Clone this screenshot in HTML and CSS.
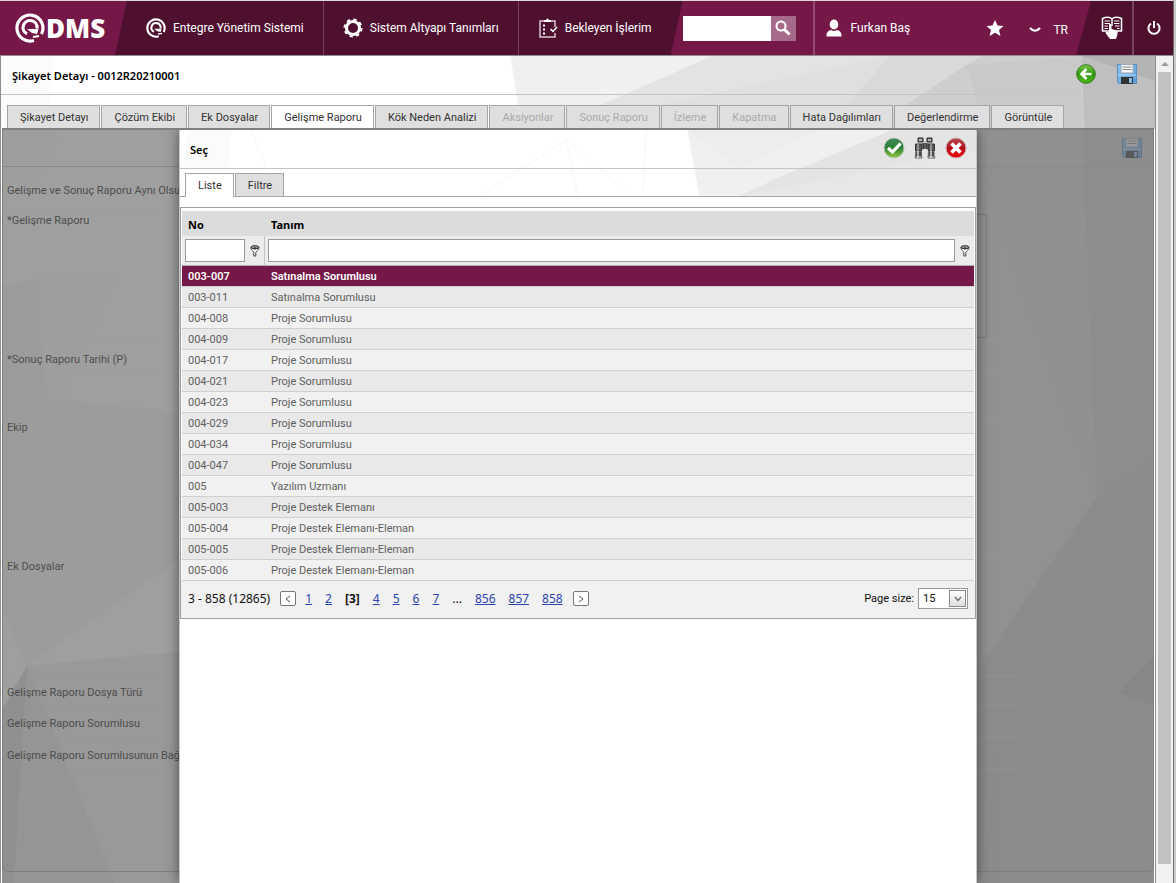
FILE: index.html
```html
<!DOCTYPE html>
<html lang="tr">
<head>
    <meta charset="UTF-8">
    <title>QDMS</title>
    <link rel="stylesheet" href="styles.css">
</head>
<body>
<svg class="defs" aria-hidden="true">
    <defs>
        <linearGradient id="blue" x1="0" y1="0" x2="1" y2="1">
            <stop offset="0" stop-color="#8fc4ee"/><stop offset="1" stop-color="#5a9cd8"/>
        </linearGradient>
        <linearGradient id="green" x1="0" y1="0" x2="0" y2="1">
            <stop offset="0" stop-color="#7cc644"/><stop offset="0.5" stop-color="#2f9a12"/><stop offset="1" stop-color="#4db81c"/>
        </linearGradient>
        <linearGradient id="ok" x1="0" y1="0" x2="0" y2="1">
            <stop offset="0" stop-color="#3f8a5c"/><stop offset="0.5" stop-color="#2f8038"/><stop offset="1" stop-color="#8cc83c"/>
        </linearGradient>
        <linearGradient id="red" x1="0" y1="0" x2="0" y2="1">
            <stop offset="0" stop-color="#b84a50"/><stop offset="0.5" stop-color="#b01018"/><stop offset="1" stop-color="#f00808"/>
        </linearGradient>
    </defs>
    <symbol id="q" viewBox="0 0 30 30">
        <path d="M19 27.400A13 13 0 1 1 26.500 21" fill="none" stroke="currentColor" stroke-width="3.200"/>
        <path d="M12 20.800A7 7 0 1 1 22 15.500" fill="none" stroke="currentColor" stroke-width="3.200"/>
        <path d="M12 16H23.500L22 21L17 20Z" fill="currentColor"/>
        <path d="M18 24L24 23" stroke="currentColor" stroke-width="2"/>
    </symbol>
    <symbol id="floppy" viewBox="0 0 20 20">
        <path d="M0.500 0.500H19.500V19.500H2L0.500 18Z" fill="url(#blue)" stroke="#5a8cc0"/>
        <path d="M4 0.500H16V9H4Z" fill="#f4f4f4" stroke="#9ab"/>
        <path d="M5.500 3H14.500M5.500 5.500H14.500" stroke="#888" stroke-width="1.200"/>
        <path d="M1 11H19" stroke="#b9dcf8"/>
        <path d="M4 13H16V20H4Z" fill="#333"/>
        <path d="M12 14H15V19H12Z" fill="#8ab8e4"/>
    </symbol>
    <symbol id="funnel" viewBox="0 0 10 12">
        <path d="M0.800 2.500C0.800 5 3.800 6 3.800 7.500V11H5.800V7.500C5.800 6 9 5 9 2.500Z" fill="#fff" stroke="#444"/>
        <ellipse cx="5" cy="2.200" rx="4" ry="1.500" fill="#999" stroke="#333"/>
        <path d="M5 2V5" stroke="#333"/>
    </symbol>
</svg>

<div class="page">
    <header class="topbar">
        <a href="#" class="logo">
            <svg class="logo-mark"><use href="#q"/></svg>
            <span>DMS</span>
        </a>
        <nav class="menu">
            <a href="#">
                <svg class="menu-icon"><use href="#q"/></svg>
                Entegre Yönetim Sistemi
            </a>
            <a href="#">
                <svg class="menu-icon" viewBox="0 0 20 20">
                    <circle cx="10" cy="10" r="8.500" fill="none" stroke="#fff" stroke-width="2" stroke-dasharray="3.338 3.338"/>
                    <circle cx="10" cy="10" r="6.500" fill="none" stroke="#fff" stroke-width="3"/>
                </svg>
                Sistem Altyapı Tanımları
            </a>
            <a href="#">
                <svg class="menu-icon" viewBox="0 0 20 20">
                    <path d="M6 3H2V19H17V15M13 3H17V9" fill="none" stroke="#d9c8d0" stroke-width="1.500"/>
                    <path d="M6 4V2H8Q9.500 -1 11 2H13V4Z" fill="#fff"/>
                    <path d="M5 7.500H7M5 11.500H7M5 15.500H7" stroke="#fff" stroke-width="2"/>
                    <path d="M12.500 11L15 13.500L19 9" fill="none" stroke="#fff" stroke-width="1.500"/>
                </svg>
                Bekleyen İşlerim
            </a>
        </nav>
        <div class="account">
            <form class="search">
                <input type="text" aria-label="Ara">
                <button type="button" aria-label="Ara">
                    <svg width="16" height="16" viewBox="0 0 16 16">
                        <circle cx="6" cy="6" r="4.500" fill="none" stroke="#fff" stroke-width="2"/>
                        <path d="M9.500 9.500L14.500 14.500" stroke="#fff" stroke-width="3"/>
                    </svg>
                </button>
            </form>
            <a href="#" class="user">
                <svg width="16" height="18" viewBox="0 0 16 18">
                    <ellipse cx="8" cy="5.500" rx="4.300" ry="5" fill="#fff"/>
                    <path d="M0.500 17.500Q0 12 5 11Q8 13 11 11Q16 12 15.500 17.500Z" fill="#fff"/>
                </svg>
                Furkan Baş
            </a>
            <button type="button" class="star" aria-label="Favoriler">
                <svg width="18" height="18" viewBox="0 0 18 18">
                    <path d="M9 1L11.500 6.500L17.500 7L13 11L14.500 17L9 13.800L3.500 17L5 11L0.500 7L6.500 6.500Z" fill="#fff"/>
                </svg>
            </button>
            <button type="button" class="lang">
                <svg width="12" height="6" viewBox="0 0 12 6">
                    <path d="M1 1Q6 6.500 11 1" fill="none" stroke="#fff" stroke-width="2.200"/>
                </svg>
                TR
            </button>
        </div>
        <button type="button" class="tool help" aria-label="Yardım">
            <svg width="22" height="24" viewBox="0 0 22 24">
                <path d="M8 15H1.500V2.500Q8 0 11 3Q14 0 20.500 2.500V15H15M11 3V10" fill="none" stroke="#fff" stroke-width="1.500"/>
                <path d="M3.500 5H9M3.500 7.500H9M3.500 10H7M3.500 12.500H7M13 5H18.500M13 7.500H18.500M14 10H18.500M16 12.500H18.500" stroke="#fff"/>
                <path d="M8 8Q9.500 7 10.500 9V13L16 14.500Q17 15 16.500 18L15 23H9L4.500 17Q5 15 8 16Z" fill="#fff"/>
            </svg>
        </button>
        <button type="button" class="tool power" aria-label="Çıkış">
            <svg width="16" height="16" viewBox="0 0 16 16">
                <path d="M5 3.500A5.600 5.600 0 1 0 11 3.500" fill="none" stroke="#fff" stroke-width="2"/>
                <path d="M8 1V8" stroke="#fff" stroke-width="2"/>
            </svg>
        </button>
    </header>

    <div class="workspace">
        <main class="content">
            <svg class="backdrop" viewBox="0 0 1155 73" preserveAspectRatio="none">
                <path d="M0 0H52L48 73H0Z" fill="#fbfbfb"/>
                <path d="M510 0H1155V73H521Z" fill="#f0f0f0"/>
                <path d="M574 0L620 45L600 49L712 0H820L680 73H640Z" fill="#f3f3f3"/>
                <path d="M574 73L600 49L712 0H1155V73Z" fill="#e3e3e3"/>
                <path d="M660 49L890 0H1155V73H700Z" fill="#dfdfdf"/>
                <path d="M825 73L890 0H1155V73Z" fill="#d9d9d9"/>
                <path d="M870 73L966 9L982 0H1155V73Z" fill="#cecece"/>
                <path d="M966 9L1082 0V73H985Z" fill="#c9c9c9"/>
                <path d="M1082 0H1155V73H1084Z" fill="#bfbfbf"/>
                <path d="M1082 0H1155V25Z" fill="#b3b3b3"/>
            </svg>
            <div class="title-bar">
                <h1>Şikayet Detayı - 0012R20210001</h1>
                <div class="actions">
                    <button type="button" aria-label="Geri">
                        <svg width="20" height="20" viewBox="0 0 20 20">
                            <circle cx="10" cy="10" r="9.300" fill="url(#green)" stroke="#2c7a18"/>
                            <path d="M15.500 10H6M10.500 5L5.500 10L10.500 15" fill="none" stroke="#fff" stroke-width="2.600"/>
                        </svg>
                    </button>
                    <button type="button" aria-label="Kaydet"><svg width="20" height="20"><use href="#floppy"/></svg></button>
                </div>
            </div>
            <nav class="tabs">
                <a href="#">Şikayet Detayı</a>
                <a href="#">Çözüm Ekibi</a>
                <a href="#">Ek Dosyalar</a>
                <a href="#" class="active">Gelişme Raporu</a>
                <a href="#">Kök Neden Analizi</a>
                <a href="#" class="disabled">Aksiyonlar</a>
                <a href="#" class="disabled">Sonuç Raporu</a>
                <a href="#" class="disabled">İzleme</a>
                <a href="#" class="disabled">Kapatma</a>
                <a href="#">Hata Dağılımları</a>
                <a href="#">Değerlendirme</a>
                <a href="#">Görüntüle</a>
            </nav>
            <section class="panel">
                <svg class="backdrop" viewBox="2 129 1152 754" preserveAspectRatio="none">
                    <path d="M2 129H1154V883H2Z" fill="#e4e4e4"/>
                    <path d="M2 129H60L38 180L2 200Z" fill="#e3e3e3"/>
                    <path d="M2 286L38 280L47 400L2 382Z" fill="#e0e0e0"/>
                    <path d="M38 280L118 273L60 400L47 400Z" fill="#e3e3e3"/>
                    <path d="M2 382L48 398L110 406L179 412V560L27 666L2 610Z" fill="#e0e0e0"/>
                    <path d="M27 666L179 652V883H2Z" fill="#dbdbdb"/>
                    <path d="M27 666L115 883H14Z" fill="#d6d6d6"/>
                    <path d="M27 666L2 710V883H14Z" fill="#cecece"/>
                    <path d="M977 129H1154V883H977Z" fill="#d0d0d0"/>
                    <path d="M985 182L1010 129H1082L1097 497Z" fill="#cecece"/>
                    <path d="M1082 129H1154V460L1097 497Z" fill="#cacaca"/>
                    <path d="M1097 497L977 670V883H1154V460Z" fill="#c9c9c9"/>
                    <path d="M1019 657L1118 693L1041 883H985L992 765Z" fill="#c7c7c7"/>
                    <path d="M1154 656L1118 693L1154 706Z" fill="#c2c2c2"/>
                </svg>
                <div class="form">
                    <div class="form-tools">
                        <button type="button" aria-label="Kaydet"><svg width="20" height="20"><use href="#floppy"/></svg></button>
                    </div>
                    <div class="fields">
                        <div class="field"><span>Gelişme ve Sonuç Raporu Aynı Olsun</span></div>
                        <div class="field top">
                            <label for="report">*Gelişme Raporu</label>
                            <textarea id="report"></textarea>
                        </div>
                        <div class="field"><span>*Sonuç Raporu Tarihi (P)</span></div>
                        <div class="field"></div>
                        <div class="field top"><span>Ekip</span></div>
                        <div class="field top"><span>Ek Dosyalar</span></div>
                        <div class="field"><span>Gelişme Raporu Dosya Türü</span></div>
                        <div class="field"><span>Gelişme Raporu Sorumlusu</span></div>
                        <div class="field"><span>Gelişme Raporu Sorumlusunun Bağ</span></div>
                    </div>
                </div>

                <div class="overlay">
                    <div class="dialog" role="dialog" aria-labelledby="dialog-title">
                        <div class="dialog-top">
                            <svg class="backdrop" viewBox="0 0 797 67" preserveAspectRatio="none">
                                <path d="M8 0H52L48 40H4Z" fill="#fbfbfb"/>
                                <path d="M72 0L88 44M387 10L300 67M387 10L398 67M387 10L452 67M467 0L463 67" fill="none" stroke="#f6f6f6"/>
                                <path d="M508 0H797V67H520Z" fill="#f0f0f0"/>
                                <path d="M508 0H640L560 40Z" fill="#ededed"/>
                                <path d="M712 0H797V67H560L600 48Z" fill="#e4e4e4"/>
                                <path d="M797 20L560 67H797Z" fill="#e7e7e7"/>
                            </svg>
                            <div class="dialog-head">
                                <h2 id="dialog-title">Seç</h2>
                                <div class="actions">
                                    <button type="button" aria-label="Tamam">
                                        <svg width="22" height="22" viewBox="0 0 22 22">
                                            <circle cx="11" cy="11" r="10" fill="url(#ok)" stroke="#b8c8b8"/>
                                            <path d="M5 11L9.500 15L17.500 6.500" fill="none" stroke="#fff" stroke-width="3.200"/>
                                        </svg>
                                    </button>
                                    <button type="button" aria-label="Bul">
                                        <svg width="22" height="22" viewBox="0 0 22 22">
                                            <path d="M4 1H9V5H4ZM13 1H18V5H13Z" fill="#777" stroke="#222"/>
                                            <path d="M5 3H8M14 3H17" stroke="#fff"/>
                                            <path d="M1.500 7H8V12L7.500 14H1.500ZM14 7H20.500V14H14.500L14 12Z" fill="#555" stroke="#333"/>
                                            <path d="M4 7V14M17 7V14" stroke="#ccc"/>
                                            <path d="M8.500 6H13.500V12H8.500Z" fill="#333"/>
                                            <path d="M11 4V12" stroke="#999"/>
                                            <path d="M2 14.500H7.500V18L8 21H1L1.500 18ZM14.500 14.500H20V18L21 21H14Z" fill="#444" stroke="#666"/>
                                            <path d="M4 14V21M17 14V21" stroke="#ddd" stroke-width="1.500"/>
                                            <path d="M1.500 20H7.500M14.500 20H20.500" stroke="#ddd"/>
                                        </svg>
                                    </button>
                                    <button type="button" aria-label="Kapat">
                                        <svg width="22" height="22" viewBox="0 0 22 22">
                                            <circle cx="11" cy="11" r="10" fill="url(#red)" stroke="#c8b0b0"/>
                                            <path d="M6.500 6.500L15.500 15.500M15.500 6.500L6.500 15.500" stroke="#fff" stroke-width="3.800"/>
                                        </svg>
                                    </button>
                                </div>
                            </div>
                            <nav class="tabs dialog-tabs">
                                <a href="#" class="active">Liste</a>
                                <a href="#">Filtre</a>
                            </nav>
                        </div>

                        <div class="grid">
                            <table>
                                <colgroup><col class="col-no"><col></colgroup>
                                <thead>
                                <tr class="heads">
                                    <th scope="col">No</th>
                                    <th scope="col">Tanım</th>
                                </tr>
                                <tr class="filters">
                                    <td>
                                        <div class="filter">
                                            <input type="text" aria-label="No">
                                            <button type="button" aria-label="No filtresi"><svg width="10" height="12"><use href="#funnel"/></svg></button>
                                        </div>
                                    </td>
                                    <td>
                                        <div class="filter">
                                            <input type="text" aria-label="Tanım">
                                            <button type="button" aria-label="Tanım filtresi"><svg width="10" height="12"><use href="#funnel"/></svg></button>
                                        </div>
                                    </td>
                                </tr>
                                </thead>
                                <tbody>
                                <tr class="selected"><td>003-007</td><td>Satınalma Sorumlusu</td></tr>
                                <tr><td>003-011</td><td>Satınalma Sorumlusu</td></tr>
                                <tr><td>004-008</td><td>Proje Sorumlusu</td></tr>
                                <tr><td>004-009</td><td>Proje Sorumlusu</td></tr>
                                <tr><td>004-017</td><td>Proje Sorumlusu</td></tr>
                                <tr><td>004-021</td><td>Proje Sorumlusu</td></tr>
                                <tr><td>004-023</td><td>Proje Sorumlusu</td></tr>
                                <tr><td>004-029</td><td>Proje Sorumlusu</td></tr>
                                <tr><td>004-034</td><td>Proje Sorumlusu</td></tr>
                                <tr><td>004-047</td><td>Proje Sorumlusu</td></tr>
                                <tr><td>005</td><td>Yazılım Uzmanı</td></tr>
                                <tr><td>005-003</td><td>Proje Destek Elemanı</td></tr>
                                <tr><td>005-004</td><td>Proje Destek Elemanı-Eleman</td></tr>
                                <tr><td>005-005</td><td>Proje Destek Elemanı-Eleman</td></tr>
                                <tr><td>005-006</td><td>Proje Destek Elemanı-Eleman</td></tr>
                                </tbody>
                            </table>
                            <div class="pager">
                                <span class="summary">3 - 858 (12865)</span>
                                <button type="button" class="step" aria-label="Önceki">
                                    <svg width="6" height="8" viewBox="0 0 6 8"><path d="M5 1L1 4L5 7" fill="none" stroke="#555"/></svg>
                                </button>
                                <div class="pages">
                                    <a href="#">1</a>
                                    <a href="#">2</a>
                                    <strong>[3]</strong>
                                    <a href="#">4</a>
                                    <a href="#">5</a>
                                    <a href="#">6</a>
                                    <a href="#">7</a>
                                    <span>...</span>
                                    <a href="#">856</a>
                                    <a href="#">857</a>
                                    <a href="#">858</a>
                                </div>
                                <button type="button" class="step" aria-label="Sonraki">
                                    <svg width="6" height="8" viewBox="0 0 6 8"><path d="M1 1L5 4L1 7" fill="none" stroke="#555"/></svg>
                                </button>
                                <label for="page-size">Page size:</label>
                                <div class="size-box">
                                    <select id="page-size">
                                        <option>15</option>
                                        <option>30</option>
                                        <option>50</option>
                                    </select>
                                    <span class="size-arrow">
                                        <svg width="8" height="6" viewBox="0 0 8 6"><path d="M1 1L4 4.500L7 1" fill="none" stroke="#777" stroke-width="1.500"/></svg>
                                    </span>
                                </div>
                            </div>
                        </div>
                    </div>
                </div>
            </section>
        </main>
        <div class="scrollbar">
            <span class="arrow"></span>
            <span class="thumb"></span>
        </div>
    </div>
</div>
</body>
</html>
```
FILE: styles.css
```css
* {
    margin: 0;
    padding: 0;
    box-sizing: border-box;
}

body {
    font-family: Roboto, "Noto Sans", sans-serif;
    font-size: 11px;
    color: #333;
    background: #cacaca;
}

a {
    color: inherit;
    text-decoration: none;
}

button {
    display: flex;
    align-items: center;
    justify-content: center;
    border: 0;
    background: none;
    font: inherit;
    color: inherit;
    cursor: pointer;
}

svg {
    display: block;
    flex: none;
}

.defs {
    position: absolute;
    width: 0;
    height: 0;
}

.page {
    display: flex;
    flex-direction: column;
    min-height: 100vh;
    margin-right: 2px;
    border-top: 1px solid #d9d9d9;
    border-right: 1px solid #707070;
    background: #fff;
}

/* top bar */

.topbar {
    display: flex;
    height: 55px;
    border-bottom: 1px solid #8e8e8e;
    background: #4f0f2f;
    color: #fff;
    font-size: 12px;
}

.logo {
    display: flex;
    align-items: center;
    width: 127px;
    padding-left: 15px;
    gap: 1px;
    background: #751847;
    clip-path: polygon(0 0, 100% 0, calc(100% - 12px) 100%, 0 100%);
    font-family: "Open Sans", "Noto Sans", sans-serif;
    font-size: 26px;
    font-weight: 800;
}

.logo-mark {
    width: 30px;
    height: 30px;
}

.menu {
    display: flex;
}

.menu a {
    display: flex;
    align-items: center;
    gap: 7px;
    padding: 0 19px;
    border-right: 1px solid #74445b;
    white-space: nowrap;
}

.menu a:last-child {
    border-right: 0;
}

.menu-icon {
    width: 20px;
    height: 20px;
}

.account {
    display: flex;
    flex: 1;
    align-items: center;
    padding-left: 12px;
    padding-right: 23px;
    background: #751847;
    clip-path: polygon(12px 0, 100% 0, calc(100% - 15px) 100%, 0 100%);
}

.search {
    display: flex;
    height: 25px;
}

.search input {
    width: 88px;
    border: 0;
    background: #fff;
}

.search button {
    width: 25px;
    background: #a66b8a;
}

.user {
    display: flex;
    align-items: center;
    gap: 9px;
    height: 100%;
    margin-left: 17px;
    padding-left: 11px;
    border-left: 2px solid #8f4a6e;
}

.star {
    margin-left: auto;
}

.lang {
    gap: 12px;
    margin-left: 25px;
    padding-top: 4px;
}

.tool {
    width: 41px;
}

.power {
    border-left: 2px solid #74445b;
}

/* page content */

.workspace {
    display: flex;
    flex: 1;
}

.content {
    position: relative;
    display: flex;
    flex: 1;
    flex-direction: column;
    border-left: 1px solid #8e8e8e;
    border-right: 1px solid #8e8e8e;
}

.backdrop {
    position: absolute;
    top: 0;
    left: 0;
    width: 100%;
    height: 73px;
}

.title-bar {
    position: relative;
    display: flex;
    align-items: center;
    justify-content: space-between;
    height: 39px;
    padding: 0 18px 2px 11px;
    border-bottom: 1px solid #c4c4c4;
}

h1,
h2 {
    padding-top: 2px;
    font-family: "Noto Sans", sans-serif;
    font-size: 11px;
    font-weight: 600;
    color: #000;
}

.actions {
    display: flex;
    align-items: center;
    gap: 21px;
}

.tabs {
    position: relative;
    display: flex;
    gap: 1px;
    margin-top: 10px;
    padding-left: 6px;
}

.tabs a {
    height: 23px;
    padding: 0 11px 0 12px;
    border: 1px solid #a5a5a5;
    border-bottom: 0;
    background: #dfdfdf;
    line-height: 24px;
    white-space: nowrap;
}

.tabs .active {
    background: #fff;
}

.tabs .disabled {
    color: #aaa;
}

.panel {
    position: relative;
    display: flex;
    flex: 1;
    flex-direction: column;
    margin: 0 1px;
}

.panel > .backdrop {
    height: 100%;
}

.form {
    position: relative;
    padding-bottom: 101px;
    border: 1px solid #b4b4b4;
    border-radius: 0 0 6px 6px;
}

.form-tools {
    display: flex;
    justify-content: flex-end;
    height: 38px;
    padding: 9px 11px;
    border-bottom: 1px solid #c4c4c4;
}

.form-tools button {
    height: 20px;
    opacity: 0.5;
}

.fields {
    display: grid;
    grid-template-rows: 44px 130px 34px 43px 139px 119px 30px 32px 32px;
    margin: 0 133px 0 4px;
    color: #707070;
}

.field {
    display: flex;
    align-items: center;
    padding-top: 3px;
    border-bottom: 1px dotted #d8d8d8;
    white-space: nowrap;
}

.field.top {
    align-items: flex-start;
}

.field label {
    width: 190px;
}

.field textarea {
    flex: 1;
    height: 124px;
    margin-right: 33px;
    border: 1px solid #b4b4b4;
    background: none;
    resize: none;
}

/* dialog */

.overlay {
    position: absolute;
    inset: 0;
    padding: 0 177px;
    border-top: 2px solid #808080;
    background: rgba(0, 0, 0, 0.3);
    overflow: hidden;
}

.dialog {
    display: flex;
    flex-direction: column;
    height: 100%;
    border-left: 1px solid #c8c8c8;
    border-right: 1px solid #c8c8c8;
    background: #fff;
    box-shadow: 0 0 12px rgba(0, 0, 0, 0.5);
}

.dialog-top {
    position: relative;
    border-bottom: 1px solid #a5a5a5;
}

.dialog-top .backdrop {
    height: 100%;
}

.dialog-head {
    position: relative;
    display: flex;
    align-items: center;
    justify-content: space-between;
    height: 39px;
    padding: 0 9px 2px 10px;
    border-bottom: 1px solid #c4c4c4;
}

.dialog-head .actions {
    gap: 9px;
}

.dialog-tabs {
    margin-top: 4px;
    padding-left: 5px;
}

.dialog-tabs .active {
    margin-bottom: -1px;
    height: 24px;
}

.grid {
    border: 1px solid #a0a0a0;
    margin-top: 10px;
}

table {
    width: 100%;
    padding: 3px 1px 0;
    border-spacing: 0;
    table-layout: fixed;
}

.col-no {
    width: 83px;
}

th,
td {
    padding: 0 6px;
    text-align: left;
}

.heads th {
    height: 25px;
    padding-top: 2px;
    background: #dcdcdc;
    color: #000;
    font-family: "Noto Sans", sans-serif;
}

.filters td {
    height: 30px;
    padding: 0 0 0 3px;
    border-bottom: 1px solid #b0b0b0;
    background: #ececec;
}

.filters td:first-child {
    border-right: 1px solid #c4c4c4;
}

.filter {
    display: flex;
    align-items: center;
}

.filter input {
    flex: 1;
    min-width: 0;
    height: 23px;
    border: 1px solid #9a9a9a;
    background: #fff;
}

.filter button {
    width: 19px;
}

tbody td {
    height: 21px;
    border-bottom: 1px solid #cfcfcf;
    background: #f1f1f1;
    color: #606060;
}

tbody tr:nth-child(even) td {
    background: #e9e9e9;
}

tbody .selected td {
    background: #751847;
    color: #fff;
    font-weight: 600;
}

.pager {
    display: flex;
    align-items: center;
    height: 37px;
    padding: 0 7px 2px;
    background: #f1f1f1;
    color: #111;
}

.summary,
.pages {
    font-family: "Noto Sans", sans-serif;
    font-size: 12px;
}

.pages {
    display: flex;
    gap: 13px;
    margin: 0 10px 0 9px;
}

.pages a {
    color: #2b45b0;
    text-decoration: underline;
}

.step {
    width: 16px;
    height: 15px;
    border: 1px solid #777;
    border-radius: 2px;
    background: #fff;
}

.summary {
    margin-right: 10px;
}

.pager label {
    margin-left: auto;
    margin-right: 4px;
}

.size-box {
    position: relative;
    width: 50px;
    height: 21px;
}

.size-box select {
    width: 100%;
    height: 100%;
    padding-left: 4px;
    border: 1px solid #999;
    border-radius: 0;
    background: #fff;
    color: #111;
    font: inherit;
    appearance: none;
}

.size-arrow {
    position: absolute;
    top: 2px;
    right: 2px;
    display: flex;
    align-items: center;
    justify-content: center;
    width: 17px;
    height: 17px;
    border: 1px solid #888;
    background: linear-gradient(#fff, #ddd);
    pointer-events: none;
}

/* scrollbar */

.scrollbar {
    display: flex;
    flex-direction: column;
    align-items: center;
    width: 17px;
    padding: 6px 0 19px;
    background: #f1f1f1;
}

.arrow {
    border: 4px solid transparent;
    border-top: 0;
    border-bottom-color: #999;
}

.thumb {
    flex: 1;
    width: 13px;
    margin-top: 6px;
    background: #c1c1c1;
}
```
